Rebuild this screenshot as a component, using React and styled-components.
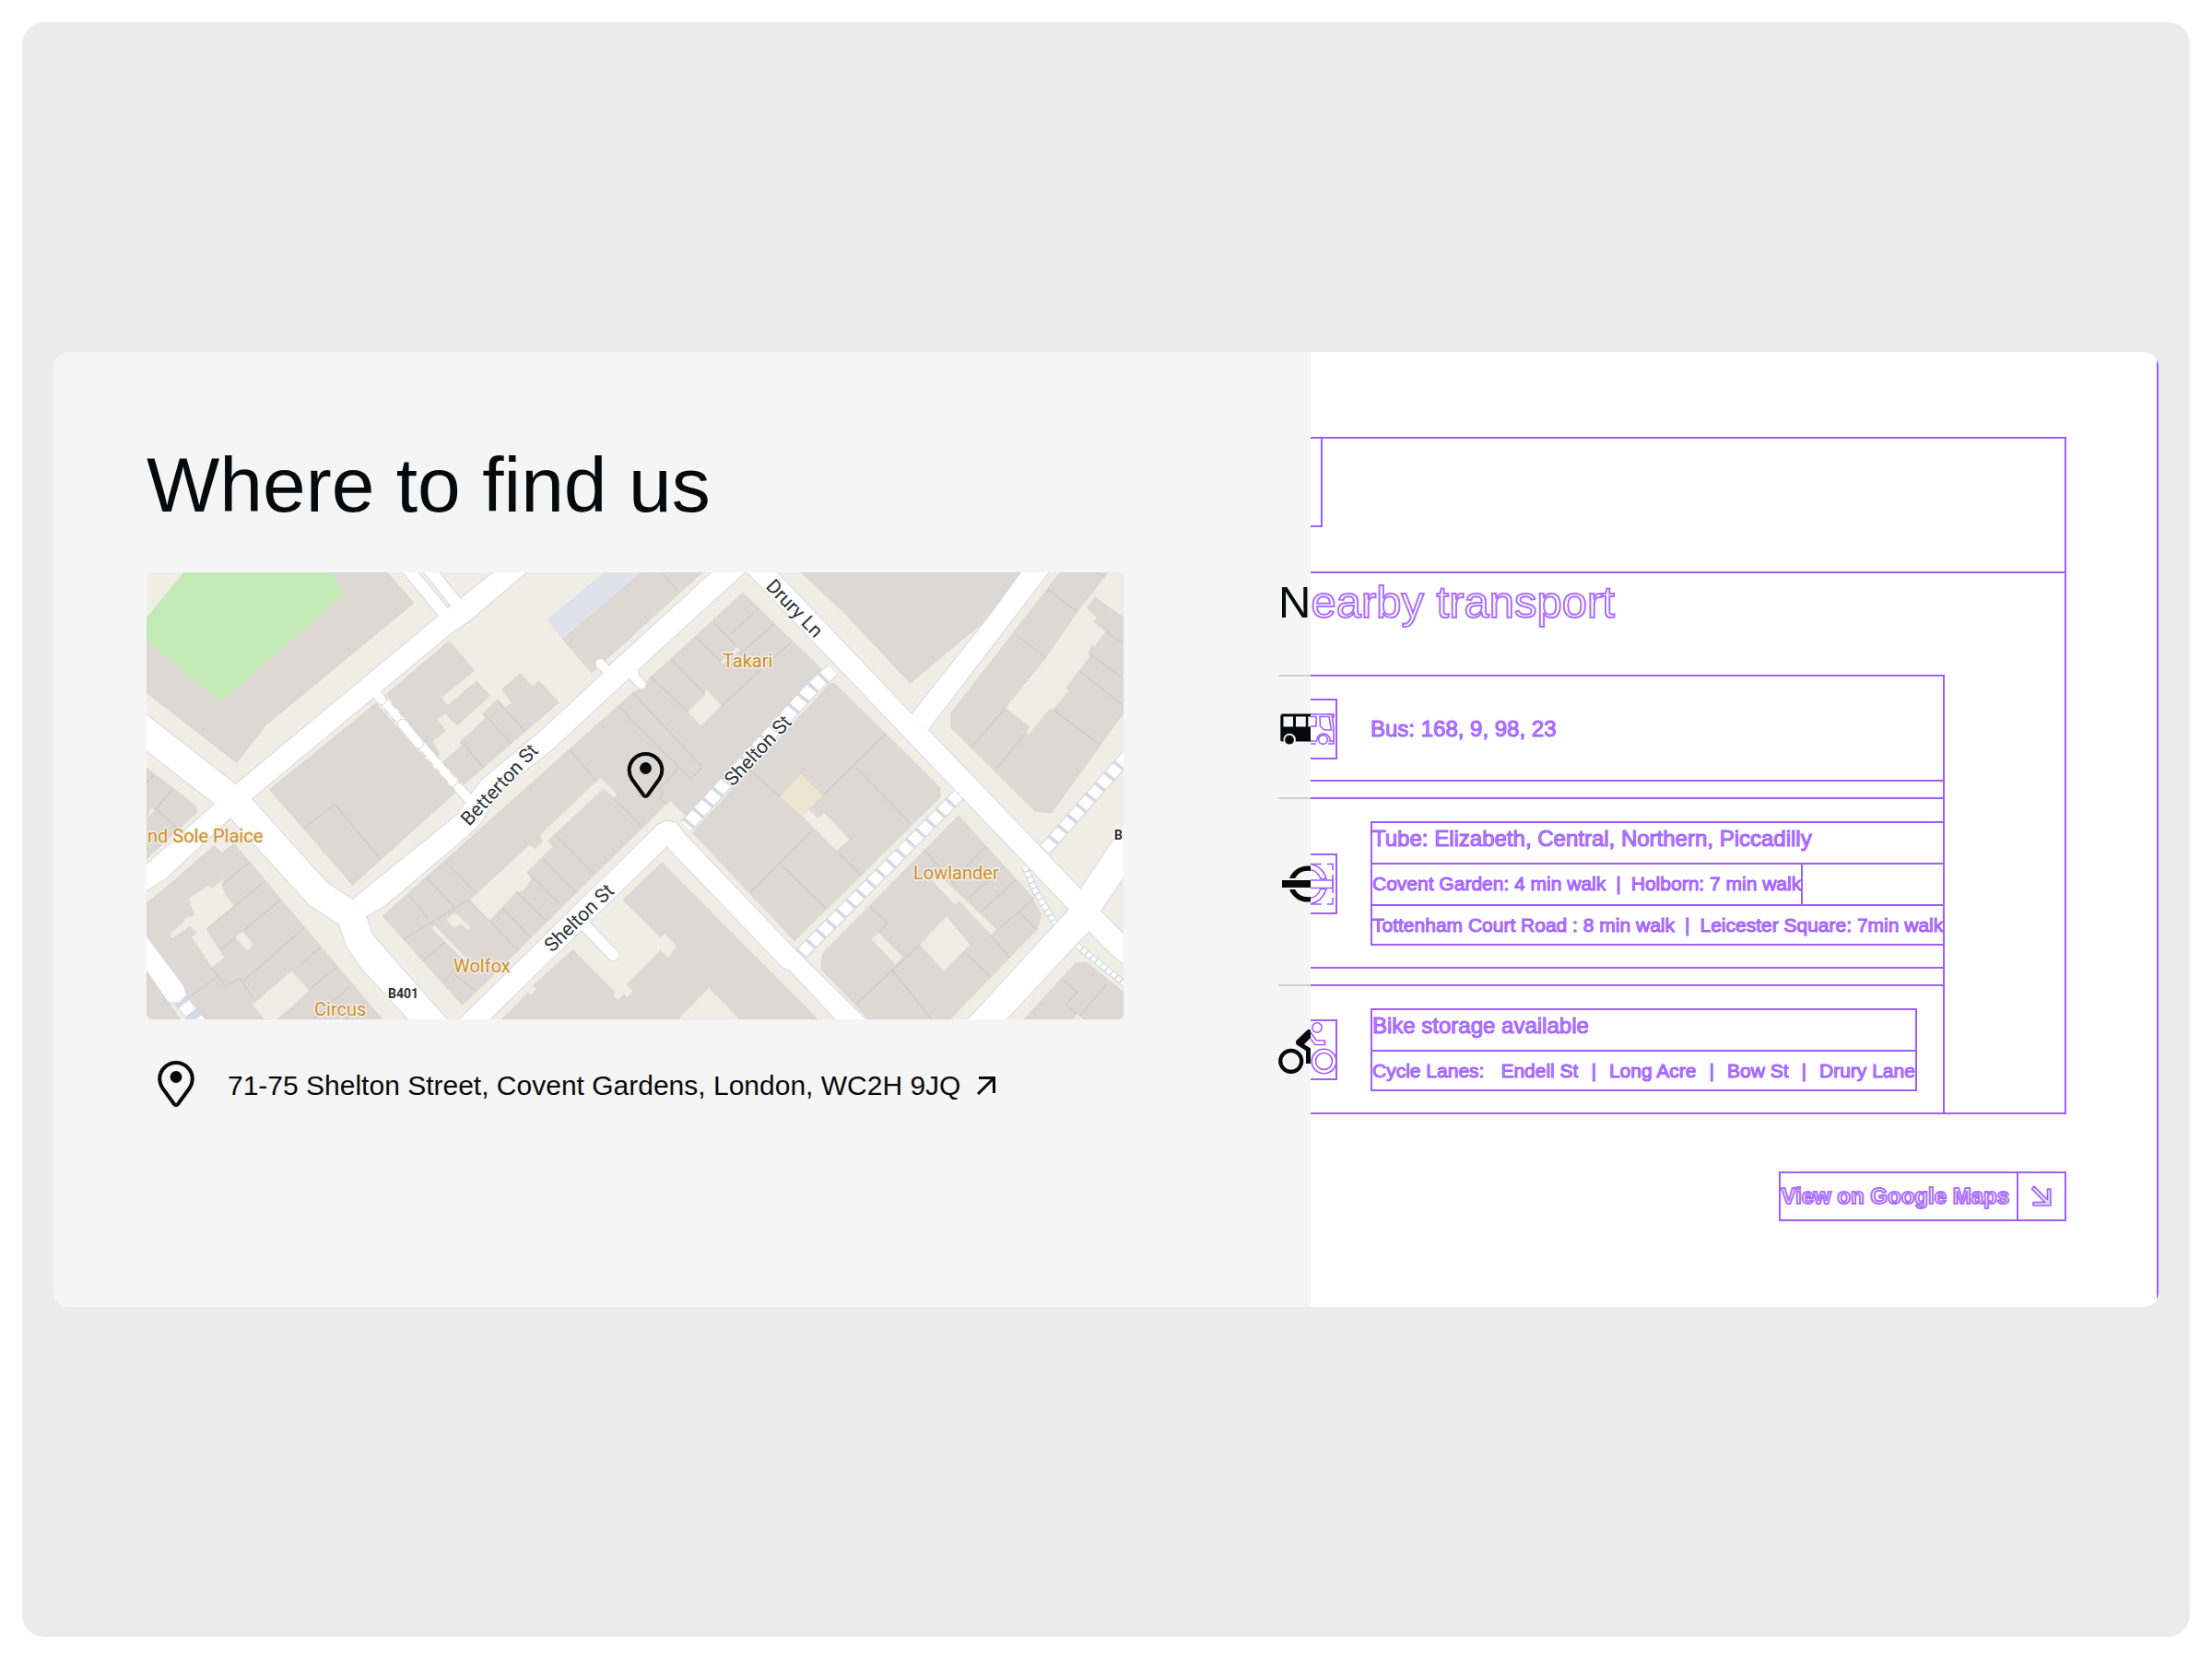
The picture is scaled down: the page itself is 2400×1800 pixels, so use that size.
import React from "react";
import styled, { createGlobalStyle } from "styled-components";

const wire = "#a05cff";
const ink = "#08090a";

const GlobalStyle = createGlobalStyle`
  *, *::before, *::after { box-sizing: border-box; }
  body {
    margin: 0;
    background: #fff;
    color: ${ink};
    font-family: "Liberation Sans", Arial, Helvetica, sans-serif;
  }
`;

const Stage = styled.main`
  margin: 24px;
  padding: 34px;
  min-height: calc(100vh - 48px);
  display: flex;
  align-items: center;
  border-radius: 24px;
  background: #ebebeb;
`;

const Card = styled.section`
  flex: 1;
  display: grid;
  grid-template-columns: minmax(0, 1364fr) minmax(0, 920fr);
  border-radius: 16px;
  overflow: hidden;
`;

const FinishedPane = styled.div`
  padding: 91px 203px 94px 101px;
  background: #f5f5f5;
`;

const WirePane = styled.div`
  display: flex;
  flex-direction: column;
  padding: 92px 98px 93px 0;
  background: #fff;
  border-right: 2px solid ${wire};
`;

const Title = styled.h1`
  margin: 0 0 42px;
  font-size: 84px;
  line-height: 106px;
  font-weight: 400;
  white-space: nowrap;
`;

const MapFrame = styled.figure`
  margin: 0;
  border-radius: 6px;
  overflow: hidden;

  svg { display: block; width: 100%; height: auto; }
`;

const MapLabel = styled.text`
  font-family: Roboto, "Open Sans", sans-serif;
  font-size: ${(p) => (p.$kind === "street" ? 21 : p.$kind === "road" ? 14 : 20)}px;
  font-weight: ${(p) => (p.$kind === "road" ? 700 : 400)};
  fill: ${(p) => (p.$kind === "place" ? "#cd9129" : "#2d2f36")};
  stroke: ${(p) => (p.$kind === "place" ? "#f3efe9" : "#ffffff")};
  stroke-width: 3px;
  stroke-linejoin: round;
  paint-order: stroke;
`;

const Address = styled.a`
  display: flex;
  align-items: center;
  margin-top: 45px;
  padding-left: 12px;
  color: inherit;
  text-decoration: none;
  font-size: 30px;
  line-height: 36px;
  white-space: nowrap;
`;

const AddressText = styled.span`
  margin: 4px 16px 0 36px;
`;

const HeaderFrame = styled.div`
  height: 146px;
  border: solid ${wire};
  border-width: 2px 2px 0 0;
`;

const TitleFrame = styled.div`
  width: 13px;
  height: 96px;
  border: solid ${wire};
  border-width: 0 2px 2px 0;
`;

const TransportFrame = styled.div`
  border: 2px solid ${wire};
  border-left: 0;
`;

const Heading = styled.h2`
  margin: 0 0 48px -35px;
  font-size: 49px;
  line-height: 62px;
  font-weight: 400;
  white-space: nowrap;
`;

const Outlined = styled.span`
  color: ${(p) => (p.$solid ? "#b482ff" : "#fff")};
  -webkit-text-stroke: ${(p) => (p.$solid ? `1px ${wire}` : "2px #ab70ff")};
`;

const List = styled.ul`
  display: grid;
  grid-template-columns: minmax(0, 1fr);
  gap: 17px;
  margin: 0 130px -2px -35px;
  padding: 0;
  list-style: none;
  border-right: 2px solid ${wire};
`;

const Row = styled.li`
  display: flex;
  align-items: center;
  gap: 36px;
  min-height: 116px;
  padding: 26px 0 25px;
  background:
    linear-gradient(to right, #cfcfcf 35px, ${wire} 35px) top / 100% 2px no-repeat,
    linear-gradient(to right, transparent 35px, ${wire} 35px) bottom / 100% 2px no-repeat;
`;

const IconSvg = styled.svg`
  flex: none;
  width: 64px;
  height: 66px;
  margin: -4px 0;
`;

const Details = styled.div`
  flex: ${(p) => (p.$wide ? "1" : "none")};
  min-width: 0;
  border-left: 2px solid ${wire};
  border-bottom: 2px solid ${wire};
  border-right: ${(p) => (p.$wide ? "0" : `2px solid ${wire}`)};
`;

const Lead = styled.div`
  height: ${(p) => (p.$bare ? 37 : 45)}px;
  font-size: 24px;
  line-height: ${(p) => (p.$bare ? 37 : 33)}px;
  white-space: nowrap;
  border-top: ${(p) => (p.$bare ? "0" : `2px solid ${wire}`)};
`;

const Line = styled.div`
  height: ${(p) => (p.$last ? 43 : 45)}px;
  border-top: 2px solid ${wire};
  font-size: 21px;
  line-height: 41px;
`;

const LineFrame = styled.div`
  display: inline-flex;
  gap: ${(p) => (p.$loose ? 14 : 11)}px;
  height: 43px;
  white-space: nowrap;
  border-right: ${(p) => (p.$closed ? `2px solid ${wire}` : "0")};

  & > :first-child { margin-right: ${(p) => (p.$loose ? 4 : 0)}px; }
`;

const MapsLink = styled.a`
  display: flex;
  align-self: flex-end;
  margin-top: 62px;
  height: 54px;
  border: 2px solid ${wire};
  color: inherit;
  text-decoration: none;
  font-size: 24px;
  line-height: 50px;
  font-weight: 700;
  white-space: nowrap;
`;

const ArrowCell = styled.span`
  display: flex;
  align-items: center;
  justify-content: center;
  width: 52px;
  margin-left: 8px;
  border-left: 2px solid ${wire};
`;

function PinShape() {
  return (
    <>
      <path
        d="M5.2 29.5C3 26 2.2 23 2.2 19.8A17.8 17.8 0 0 1 37.8 19.8C37.8 23 37 26 34.8 29.5L22.2 46.8Q20 49.4 17.8 46.8Z"
        fill="none"
        stroke={ink}
        strokeWidth="4"
      />
      <circle cx="20" cy="17.5" r="6.4" fill={ink} />
    </>
  );
}

/* Left of x=35 an icon is painted solid, right of it only its contour shows. */
function SplitIcon({ name, contour, children }) {
  return (
    <IconSvg viewBox="0 -1 64 66" aria-hidden="true">
      <clipPath id={`${name}-left`}><rect x="0" y="-1" width="35" height="66" /></clipPath>
      <clipPath id={`${name}-right`}><rect x="35" y="-1" width="29" height="66" /></clipPath>
      <g clipPath={`url(#${name}-left)`} fill={ink}>{children}</g>
      <g clipPath={`url(#${name}-right)`} fill="none" stroke={wire} strokeWidth="1.6">
        {contour || children}
        <path d="M30 0H63V64H30" strokeWidth="2" />
      </g>
    </IconSvg>
  );
}

const BusIcon = () => (
  <SplitIcon
    name="bus"
    contour={
      <>
        <path d="M33 16H56Q58 16 58.500 19L60 31V45H54.500M33 48H41M54 48H60V42.500" />
        <path d="M33 18.500H41V29H33M45 18.500H55L57.500 33H50L45.500 29Z" />
        <path d="M33 45H41.500C42 34.500 56 34.500 56.500 45" />
        <circle cx="48.500" cy="43.500" r="4.800" />
        <path d="M53 16H60V20" />
      </>
    }
  >
    <path
      fillRule="evenodd"
      d="M5 15.500H40V45.500H18.500A6.700 6.700 0 1 0 5.800 45.500H4Q2.300 45.500 2.300 43.500V18.500Q2.300 15.500 5 15.500ZM5.500 18.500V29.500H16V18.500ZM19 18.500V29.500H29.800V18.500ZM32.300 18.500V29.500H40V18.500Z"
    />
    <circle cx="12" cy="43.700" r="4.900" />
  </SplitIcon>
);

const TubeIcon = () => (
  <SplitIcon
    name="tube"
    contour={
      <>
        <path d="M32 10A22 22 0 0 1 52 26.500H46A16 16 0 0 0 32 16M32 54A22 22 0 0 0 52 37.500H46A16 16 0 0 1 32 48" />
        <path d="M30 28H59V36.500H30" />
        <path d="M35 10.500H47M53 10.500H59V17M59 22V42M59 47V54H53M47 54H35" />
      </>
    }
  >
    <path d="M12 26A21.500 21.500 0 0 1 52 26H46A16 16 0 0 0 18 26ZM12 38A21.500 21.500 0 0 0 52 38H46A16 16 0 0 1 18 38ZM4 28H60V36H4Z" />
  </SplitIcon>
);

const BikeIcon = () => (
  <SplitIcon
    name="bike"
    contour={
      <>
        <path d="M34 12L41.500 22H50.500V26.500H39.500L34 18.500" />
        <circle cx="42" cy="8" r="5.200" />
        <circle cx="49.500" cy="44.500" r="13.300" />
        <circle cx="49.500" cy="44.500" r="9" />
      </>
    }
  >
    <circle cx="13.700" cy="44.300" r="11.500" fill="none" stroke={ink} strokeWidth="4.200" />
    <path d="M31.500 10.500Q34 9.500 36 11V18L28 26L35 30.500V47H30V33L20.500 27Q17.500 24.500 20 21.500Z" />
  </SplitIcon>
);

const roads = [
  "26,985 237,787 303,722 930,175 1100,33 1200,33 1025,190 968,230 350,770 285,832 90,1025 26,1068",
  "26,497 300,722 350,770 585,1045 663,1098 705,1153 722,1208 755,1250 955,1488 837,1488 690,1320 645,1250 622,1178 530,1115 285,832 237,787 26,613",
  "663,1098 990,820 1012,785 1032,752 1062,710 1240,555 1435,365 1460,335 1775,33 1875,33 1545,350 1550,375 1520,375 1280,610 1115,745 1065,840 1035,875 760,1120 705,1153",
  "995,1488 1607,855 1635,842 1665,850 1690,885 2035,1265 2250,1488 2158,1488 2015,1328 1995,1320 1635,925 1087,1488",
  "1885,33 1975,33 2393,495 2443,545 2915,1065 2977,1135 3060,1225 3060,1315 3010,1275 2940,1200 2880,1130",
  "2393,495 2630,180 2732,33 2815,33 2443,545",
  "2568,1488 2880,1130 2915,1065 3060,835 3060,1005 2977,1135 2940,1200 2685,1488",
  "820,33 930,175 945,185 965,160 865,33",
  "885,33 970,145 985,150 1005,130 930,33",
  "20,1212 140,1380 148,1408 125,1432 95,1432 80,1410 20,1318",
];

const roadStubs = [
  { d: "M1430 330L1460 365", w: 28 },
  { d: "M1525 365L1556 398", w: 28 },
  { d: "M1375 1175L1470 1280", w: 34 },
  { d: "M735 425L752 448", w: 28 },
  { d: "M818 526L868 590", w: 28 },
  { d: "M992 735L1025 775", w: 28 },
];

const buildings = [
  "590,33 770,33 852,133 395,530 305,652 26,425 26,200",
  "962,257 1040,352 937,440 958,467 1047,387 1088,435 987,530 948,490 925,512 950,548 910,585 932,625 920,630 768,430",
  "1125,415 1182,363 1218,405 1240,387 1300,457 1008,722 942,650 1000,600 998,583 1075,508 1067,492 1110,448 1135,475 1157,457",
  "735,460 980,750 663,1050 407,740",
  "1313,250 1555,33 1745,33 1402,360",
  "757,1152 1530,425 1550,415 1585,375 1870,100 2115,350 1695,825 1645,775 1003,1442",
  "2140,395 2155,395 2480,735 2480,765 2030,1232 1715,880",
  "2050,33 2180,160 2388,393 2620,190 2730,33",
  "2852,33 3048,33 3048,490 2825,815 2775,810 2515,540 2515,490",
  "2538,825 2765,1090 2793,1150 2780,1195 2510,1488 2260,1488 2113,1325 2117,1275",
  "1125,1488 1205,1403 1218,1410 1235,1388 1222,1378 1345,1262 1475,1400 1468,1412 1485,1427 1503,1408 1512,1420 1532,1395 1512,1375 1615,1265 1640,1290 1667,1250 1630,1207 1615,1220 1500,1100 1620,978 2080,1465 2100,1488",
  "26,670 180,795 180,815 26,965",
  "235,923 258,947 297,917 755,1488 200,1488 150,1420 142,1380 26,1210 26,1110 68,1075",
  "26,1330 85,1420 130,1488 26,1488",
  "2740,1488 2900,1305 2933,1303 3048,1400 3048,1488",
];

const courtyards = [
  "1243,887 1430,700 1482,757 1470,768 1440,738 1268,905 1283,927 1203,1008 1218,1030 1190,1072 1170,1072 1088,1167 1025,1100 1210,920 1228,933 1250,908",
  "1700,487 1752,432 1755,410 1805,467 1740,533",
  "952,1162 980,1140 1030,1190 1020,1198 1000,1180 975,1190",
  "905,1190 918,1182 1025,1300 1003,1290",
  "1800,325 1853,275 1862,285 1810,330",
  "2052,825 2075,803 2102,833 2123,815 2200,903 2160,940",
  "3000,33 3048,33 3048,180 2960,113 2935,148 2965,180 2955,195 2993,225 2958,275 2948,272 2938,298 2945,305 2870,408 2878,420 2830,480 2820,478 2753,562 2745,555 2757,535 2682,475 2808,310 2905,162",
  "2500,1152 2573,1245 2492,1330 2417,1245",
  "2267,1227 2290,1205 2365,1285 2343,1310",
  "2450,1030 2490,1030 2655,1195 2638,1215 2540,1103 2525,1115",
  "1765,1385 1860,1488 1670,1488",
  "40,797 52,808 26,835",
  "155,1095 220,1050 228,1060 268,1028 258,1050 275,1090 297,1118 210,1195 268,1288 228,1320 165,1220 182,1205 160,1185 105,1225 95,1212 145,1165 140,1160 175,1148",
  "300,1220 323,1200 357,1245 337,1267",
  "475,1330 530,1395 430,1488 390,1488 353,1440",
  "2890,1488 2905,1470 2925,1488",
];

const seams =
  "M512 868L608 788L752 970M1620 33L1670 95M1487 467L1540 530L1710 705L1745 668L1530 425M1335 610L1415 710M1440 738L1558 860M1290 887L1410 1015M1250 965L1355 1075M1203 1008L1310 1120M1170 1072L1265 1170M1122 1122L1215 1222M950 975L1040 1072M893 1028L980 1125M835 1080L897 1160M1088 1167L1020 1100L822 1227M1088 1167L1175 1265M880 1300L955 1230M945 1370L1003 1290M975 1340L1042 1395M1780 197L1855 278L1823 310M1723 243L1805 325M1648 315L1755 430M1920 150L1823 243M1965 203L1860 300M2020 260L1805 467M1585 373L1700 487M1670 670L1612 740L1625 755L1612 768L1640 790M1890 675L1985 763M2117 760L2313 557M2218 665L2388 850M2088 870L1895 1073M1990 985L2130 1130M2160 940L2235 1018M2812 88L2905 162M2713 235L2808 310M2682 475L2580 600M2745 555L2653 675M2830 480L2978 597M2910 353L3048 467M2945 300L3048 380M2993 225L3048 265M2960 33L2990 47M2430 935L2540 1065M2623 925L2530 1025M2680 990L2570 1090M2715 1035L2608 1137M2770 1095L2638 1215L2695 1288M2558 1270L2637 1350M2417 1245L2220 1440M2330 1325L2455 1488M2262 1120L2317 1173L2290 1205M2725 1140L2778 1195M105 740L55 805L125 870M26 718L48 693M343 978L260 1050M390 1040L210 1195M438 1100L255 1262M512 1192L323 1365M565 1253L505 1307M613 1320L530 1390M657 1380L540 1488M228 1320L270 1382L315 1355L355 1420M245 1350L150 1420M705 1430L640 1488M2995 1375L2910 1480L2870 1440L2905 1398L2860 1358M1000 583L1070 670M1067 492L1155 590M1110 448L1195 550";

const steps = [
  { d: "M2148 350L2085 410L1695 860", w: 40, gap: "34 11" },
  { d: "M2540 755L2050 1275", w: 36, gap: "34 11" },
  { d: "M3058 632L2805 935", w: 36, gap: "34 11" },
  { d: "M2742 990L2775 1070L2838 1180", w: 15, gap: "15 5" },
  { d: "M2905 1248L3060 1380", w: 15, gap: "15 5" },
  { d: "M130 1425L190 1500", w: 40, gap: "0 18 34 10" },
];

function StreetMap() {
  return (
    <svg viewBox="0 0 1060 485" role="img" aria-label="Map of the streets around Shelton Street">
      <rect width="1060" height="485" fill="#f0ede5" />
      <g transform="scale(0.3508 0.3333) translate(-26 -33)">
        <g fill="#ddd8d4" stroke="#d2cdc9" strokeWidth="2">
          {buildings.map((p) => <polygon key={p} points={p} />)}
        </g>
        <path d={seams} fill="none" stroke="#ccc7c4" strokeWidth="3" />
        <g fill="#f0ede5" stroke="#d8d3ce" strokeWidth="1">
          {courtyards.map((p) => <polygon key={p} points={p} />)}
        </g>
        <polygon points="26,33 140,33 26,180" fill="#f0ede5" />
        <polygon points="140,33 590,33 643,100 255,455 26,255 26,180" fill="#c3e9b5" />
        <polygon points="1265,187 1440,33 1555,33 1313,250" fill="#dfe2ea" />
        <polygon points="1985,763 2050,690 2117,760 2052,825" fill="#eee5d0" />

        <path d="M750 440L1015 765" stroke="#c9cddb" strokeWidth="32" strokeDasharray="22 14" />
        <path d="M750 440L1015 765" stroke="#fff" strokeWidth="25" />
        {steps.map((s) => (
          <g key={s.d} fill="none">
            <path d={s.d} stroke="#d3dae3" strokeWidth={s.w + 7} />
            <path d={s.d} stroke="#fff" strokeWidth={s.w} strokeDasharray={s.gap} />
          </g>
        ))}
        <g stroke="#d8dce7" strokeWidth="7" strokeLinejoin="round">
          {roads.map((p) => <polygon key={p} points={p} />)}
        </g>
        {roadStubs.map((s) => (
          <path key={s.d} d={s.d} stroke="#d8dce7" strokeWidth={s.w + 7} strokeLinecap="round" />
        ))}
        <g fill="#fff">
          {roads.map((p) => <polygon key={p} points={p} />)}
        </g>
        {roadStubs.map((s) => (
          <path key={s.d} d={s.d} stroke="#fff" strokeWidth={s.w} strokeLinecap="round" />
        ))}
      </g>

      <MapLabel $kind="place" x="1" y="293">nd Sole Plaice</MapLabel>
      <MapLabel $kind="place" x="333" y="434">Wolfox</MapLabel>
      <MapLabel $kind="place" x="182" y="481">Circus</MapLabel>
      <MapLabel $kind="place" x="625" y="103">Takari</MapLabel>
      <MapLabel $kind="place" x="832" y="333">Lowlander</MapLabel>
      <MapLabel $kind="road" x="262" y="462">B401</MapLabel>
      <MapLabel $kind="road" x="1050" y="290">B</MapLabel>
      <MapLabel $kind="street" transform="translate(350 276) rotate(-47)">Betterton St</MapLabel>
      <MapLabel $kind="street" transform="translate(440 413) rotate(-44)">Shelton St</MapLabel>
      <MapLabel $kind="street" transform="translate(636 233) rotate(-47)">Shelton St</MapLabel>
      <MapLabel $kind="street" transform="translate(671 16) rotate(46)">Drury Ln</MapLabel>

      <g transform="translate(521.500 195)"><PinShape /></g>
    </svg>
  );
}

function Segments({ items, closed, loose }) {
  return (
    <LineFrame $closed={closed} $loose={loose}>
      {items.map((text, i) => (
        <Outlined key={i} $solid>{text}</Outlined>
      ))}
    </LineFrame>
  );
}

export default function App() {
  return (
    <>
      <GlobalStyle />
      <Stage>
        <Card>
          <FinishedPane>
            <Title>Where to find us</Title>
            <MapFrame><StreetMap /></MapFrame>
            <Address href="#directions">
              <svg width="40" height="50" viewBox="0 0 40 50" aria-hidden="true"><PinShape /></svg>
              <AddressText>71-75 Shelton Street, Covent Gardens, London, WC2H 9JQ</AddressText>
              <svg width="24" height="24" viewBox="0 0 24 24" fill="none" stroke={ink} strokeWidth="3" aria-hidden="true">
                <path d="M4 5.500H20.500V22M20 6L3 23" />
              </svg>
            </Address>
          </FinishedPane>

          <WirePane>
            <HeaderFrame><TitleFrame /></HeaderFrame>
            <TransportFrame>
              <Heading>N<Outlined>earby transport</Outlined></Heading>
              <List>
                <Row>
                  <BusIcon />
                  <Lead $bare><Outlined $solid>Bus: 168, 9, 98, 23</Outlined></Lead>
                </Row>
                <Row>
                  <TubeIcon />
                  <Details $wide>
                    <Lead><Outlined $solid>Tube: Elizabeth, Central, Northern, Piccadilly</Outlined></Lead>
                    <Line><Segments closed items={["Covent Garden: 4 min walk", "|", "Holborn: 7 min walk"]} /></Line>
                    <Line $last><Segments items={["Tottenham Court Road : 8 min walk", "|", "Leicester Square: 7min walk"]} /></Line>
                  </Details>
                </Row>
                <Row>
                  <BikeIcon />
                  <Details>
                    <Lead><Outlined $solid>Bike storage available</Outlined></Lead>
                    <Line $last>
                      <Segments loose items={["Cycle Lanes:", "Endell St", "|", "Long Acre", "|", "Bow St", "|", "Drury Lane"]} />
                    </Line>
                  </Details>
                </Row>
              </List>
            </TransportFrame>
            <MapsLink href="#google-maps">
              <Outlined>View on Google Maps</Outlined>
              <ArrowCell>
                <svg width="24" height="24" viewBox="0 0 24 24" fill="#e3d2ff" stroke={wire} strokeWidth="1.500" strokeLinejoin="round" aria-hidden="true">
                  <path d="M4 1L18.500 15.500V4H22V22H3V18.500H15.500L1.500 4Z" />
                </svg>
              </ArrowCell>
            </MapsLink>
          </WirePane>
        </Card>
      </Stage>
    </>
  );
}
